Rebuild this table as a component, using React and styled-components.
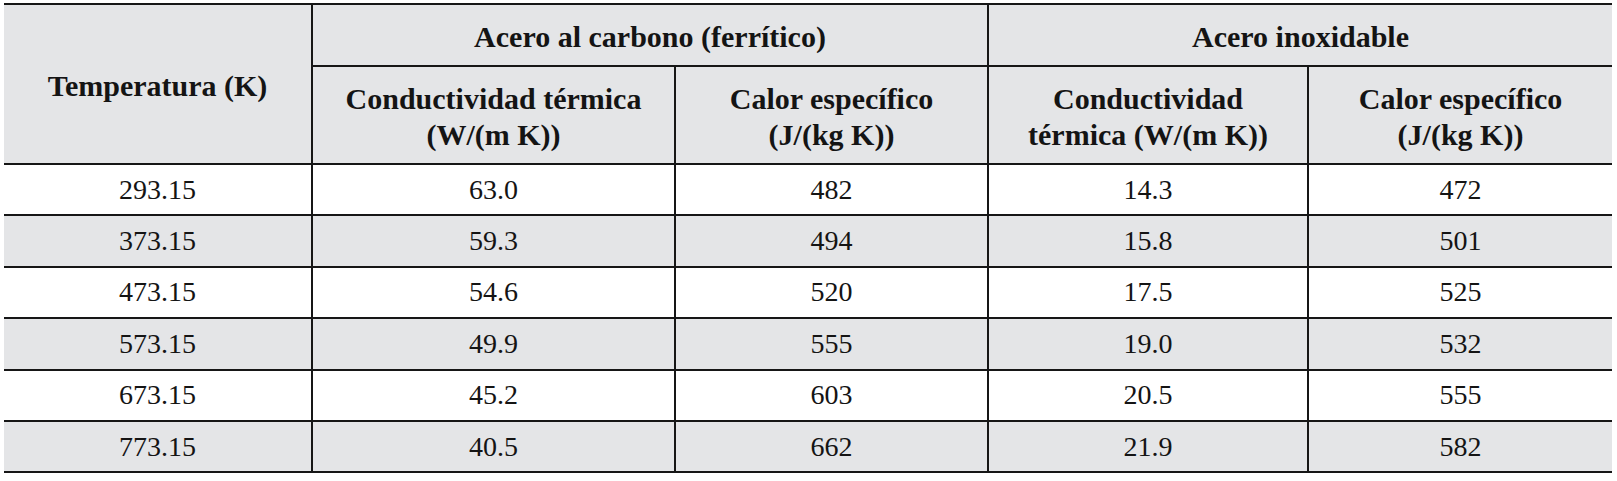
import React from "react";
import styled, { createGlobalStyle } from "styled-components";

const GlobalStyle = createGlobalStyle`
  html, body {
    margin: 0;
    padding: 0;
    background: #ffffff;
  }
  body {
    font-family: "Liberation Serif", "Times New Roman", serif;
  }
`;

const Page = styled.div`
  padding: 3px 5px 0 4px;
  background: #ffffff;
`;

const Table = styled.table`
  width: 1608px;
  border-collapse: collapse;
  table-layout: fixed;
  font-family: "Liberation Serif", "Times New Roman", serif;
  color: #141414;
  border-top: 2px solid #161616;
  border-bottom: 2px solid #161616;
`;

const Col = styled.col`
  width: ${(p) => p.$w}px;
`;

const HeadRow = styled.tr`
  height: ${(p) => p.$h}px;
  background: #e4e5e7;
`;

const HeadCell = styled.th`
  font-weight: 700;
  font-size: 30px;
  line-height: 36px;
  text-align: center;
  vertical-align: middle;
  padding: 3px 6px 0;
  border-bottom: ${(p) => (p.$ruled ? "2px solid #161616" : "none")};
  border-left: ${(p) => (p.$first ? "none" : "2px solid #161616")};
`;

const Row = styled.tr`
  height: 51.4px;
  background: ${(p) => (p.$shaded ? "#e4e5e7" : "#ffffff")};
`;

const Cell = styled.td`
  font-size: 28px;
  line-height: 32px;
  text-align: center;
  vertical-align: middle;
  padding: 0 8px;
  border-bottom: 2px solid #161616;
  border-left: ${(p) => (p.$first ? "none" : "2px solid #161616")};
`;

const rows = [
  ["293.15", "63.0", "482", "14.3", "472"],
  ["373.15", "59.3", "494", "15.8", "501"],
  ["473.15", "54.6", "520", "17.5", "525"],
  ["573.15", "49.9", "555", "19.0", "532"],
  ["673.15", "45.2", "603", "20.5", "555"],
  ["773.15", "40.5", "662", "21.9", "582"],
];

export default function App() {
  return (
    <>
      <GlobalStyle />
      <Page>
        <Table>
          <colgroup>
            <Col $w={308} />
            <Col $w={363} />
            <Col $w={313} />
            <Col $w={320} />
            <Col $w={304} />
          </colgroup>
          <thead>
            <HeadRow $h={62}>
              <HeadCell rowSpan={2} $first $ruled>
                Temperatura (K)
              </HeadCell>
              <HeadCell colSpan={2} $ruled>
                Acero al carbono (ferrítico)
              </HeadCell>
              <HeadCell colSpan={2} $ruled>
                Acero inoxidable
              </HeadCell>
            </HeadRow>
            <HeadRow $h={98}>
              <HeadCell $ruled>
                Conductividad térmica
                <br />
                (W/(m K))
              </HeadCell>
              <HeadCell $ruled>
                Calor específico
                <br />
                (J/(kg K))
              </HeadCell>
              <HeadCell $ruled>
                Conductividad
                <br />
                térmica (W/(m K))
              </HeadCell>
              <HeadCell $ruled>
                Calor específico
                <br />
                (J/(kg K))
              </HeadCell>
            </HeadRow>
          </thead>
          <tbody>
            {rows.map((r, i) => (
              <Row key={r[0]} $shaded={i % 2 === 1}>
                {r.map((v, j) => (
                  <Cell key={j} $first={j === 0}>
                    {v}
                  </Cell>
                ))}
              </Row>
            ))}
          </tbody>
        </Table>
      </Page>
    </>
  );
}
